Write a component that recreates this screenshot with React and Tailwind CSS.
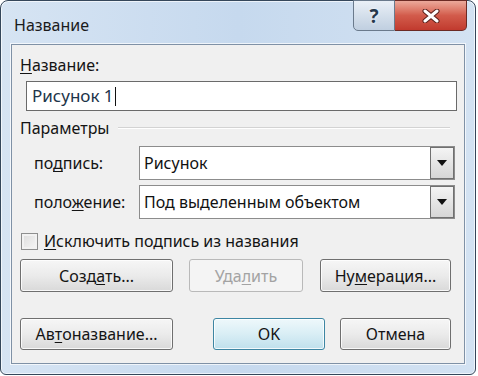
import React from "react";

const Btn = ({ className, children, disabled, primary }) => {
  const look = primary
    ? "border-[#3d86a3] bg-gradient-to-b from-[#eef8fb] via-[#d9eef5] to-[#bfe0ec] shadow-[inset_0_0_0_1px_rgba(255,255,255,0.8)]"
    : disabled
    ? "border-[#b9b9b9] bg-[#f4f4f4] text-[#a3a3a3]"
    : "border-[#6f6f6f] bg-gradient-to-b from-[#f6f6f6] via-[#ebebeb] to-[#d9d9d9] shadow-[inset_0_0_0_1px_rgba(255,255,255,0.8)]";
  return (
    <div
      className={
        "flex items-center justify-center rounded-[3px] border " + look + " " + className
      }
    >
      {children}
    </div>
  );
};

const Combo = ({ value }) => (
  <div className="flex h-[34px] w-[316px] items-stretch border border-[#8c8c8c] bg-white">
    <div className="flex flex-1 items-center pl-[4px] text-[#111]">{value}</div>
    <div className="flex w-[24px] items-center justify-center border border-[#707070] bg-gradient-to-b from-[#f4f4f4] to-[#d6d6d6]">
      <svg width="10" height="6" viewBox="0 0 10 6">
        <path d="M0 0 H10 L5 6 Z" fill="#111" />
      </svg>
    </div>
  </div>
);

export default function App() {
  return (
    <div className="h-[376px] w-[478px] bg-white font-['Noto_Sans',sans-serif] text-[16px] leading-[20px] text-[#141414]">
      <div className="flex h-[375px] w-[476px] flex-col rounded-t-[8px] rounded-b-[6px] border border-[#35475b] bg-gradient-to-r from-[#d6e4f3] via-[#c6d9ee] to-[#d3e2f2] shadow-[inset_0_0_0_1px_rgba(255,255,255,0.65)]">
        {/* title bar */}
        <div className="flex h-[43px] items-start justify-between">
          <div className="pl-[13px] pt-[14px] text-[16px] text-[#1b1b1b]">Название</div>
          <div className="mr-[8px] mt-[-1px] flex">
            <div className="flex h-[31px] w-[42px] items-center justify-center rounded-bl-[5px] border border-[#6a7a8c] bg-gradient-to-b from-[#eaf0f7] via-[#d4dfeb] to-[#c0cfe0] text-[19px] font-bold text-[#26384b] [text-shadow:0_0_3px_#fff]">
              ?
            </div>
            <div className="flex h-[31px] w-[72px] items-center justify-center rounded-br-[5px] border border-l-0 border-[#6b2a24] bg-gradient-to-b from-[#eba99b] via-[#d25b4b] to-[#c13a2e]">
              <svg width="18" height="14" viewBox="0 0 18 14">
                <path d="M3 2 L15 12 M15 2 L3 12" stroke="#5a1f1a" strokeWidth="5" strokeLinecap="round" />
                <path d="M3 2 L15 12 M15 2 L3 12" stroke="#fff" strokeWidth="3" strokeLinecap="round" />
              </svg>
            </div>
          </div>
        </div>

        {/* client area */}
        <div className="mx-[10px] mb-[10px] flex flex-1 flex-col border border-[#7f91a6] bg-[#f0f0f0] pl-[8px] shadow-[0_0_0_1px_rgba(255,255,255,0.7)]">
          <div className="mt-[10px]">
            <u className="underline-offset-2">Н</u>азвание:
          </div>
          <div className="ml-[6px] mt-[6px] flex h-[30px] w-[431px] items-center border border-[#6a6a6a] bg-white pl-[5px] text-[17px] text-[#1d3449]">
            Рисунок 1<span className="ml-[1px] h-[19px] w-[1px] bg-[#111]" />
          </div>

          <div className="mt-[7px] flex items-center">
            <span>Параметры</span>
            <div className="ml-[8px] mr-[14px] h-[2px] flex-1 border-t border-b border-t-[#d3d3d3] border-b-white" />
          </div>

          <div className="mt-[8px] grid grid-cols-[105px_316px] items-center gap-y-[5px] pl-[14px]">
            <div>
              по<u className="underline-offset-2">д</u>пись:
            </div>
            <Combo value="Рисунок" />
            <div>
              поло<u className="underline-offset-2">ж</u>ение:
            </div>
            <Combo value="Под выделенным объектом" />
          </div>

          <div className="mt-[12px] flex h-[20px] items-center">
            <div className="ml-[1px] h-[17px] w-[17px] border border-[#8e8f8f] bg-gradient-to-br from-[#dcdcdc] to-[#f7f7f7] shadow-[inset_0_0_0_2px_#f2f2f2]" />
            <span className="ml-[6px]">
              <u className="underline-offset-2">И</u>сключить подпись из названия
            </span>
          </div>

          <div className="mt-[8px] flex">
            <Btn className="h-[33px] w-[153px]">
              Созд<u className="underline-offset-2">а</u>ть...
            </Btn>
            <Btn disabled className="ml-[16px] h-[33px] w-[114px]">
              Уда<u className="underline-offset-2">л</u>ить
            </Btn>
            <Btn className="ml-[17px] h-[33px] w-[131px]">
              Ну<u className="underline-offset-2">м</u>ерация...
            </Btn>
          </div>

          <div className="mt-[26px] flex">
            <Btn className="h-[32px] w-[153px]">
              Ав<u className="underline-offset-2">т</u>оназвание...
            </Btn>
            <Btn primary className="ml-[40px] h-[32px] w-[112px]">
              OK
            </Btn>
            <Btn className="ml-[15px] h-[32px] w-[111px]">Отмена</Btn>
          </div>
        </div>
      </div>
    </div>
  );
}
